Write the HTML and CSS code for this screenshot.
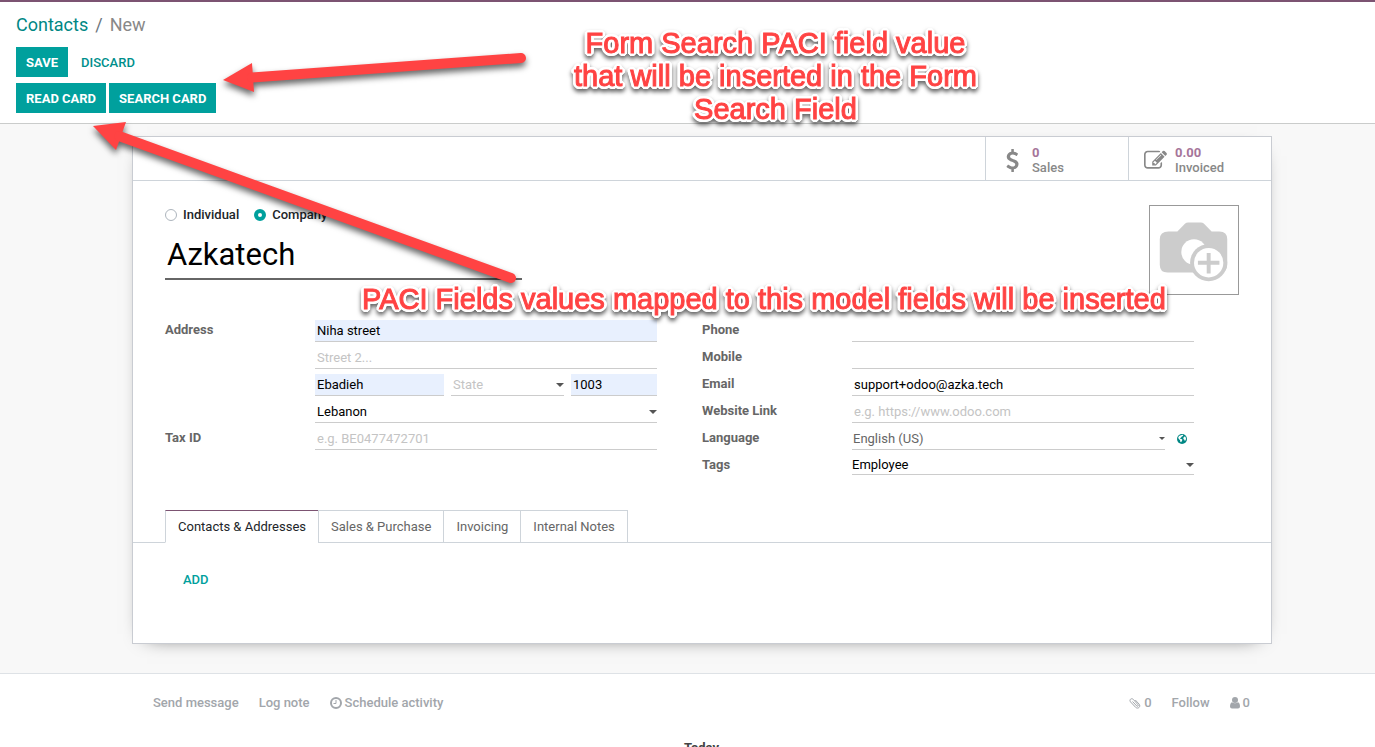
FILE: index.html
```html
<!DOCTYPE html>
<html lang="en">
<head>
<meta charset="utf-8">
<title>New - Contacts</title>
<link rel="stylesheet" href="styles.css">
</head>
<body>
<header class="control-panel">
  <nav class="breadcrumb"><a href="#">Contacts</a><span class="sep">/</span><span class="current">New</span></nav>
  <div class="button-row">
    <button class="btn primary" type="button">SAVE</button>
    <button class="btn flat" type="button">DISCARD</button>
  </div>
  <div class="button-row second">
    <button class="btn primary" type="button">READ CARD</button>
    <button class="btn primary" type="button">SEARCH CARD</button>
  </div>
</header>

<main class="form-view">
  <section class="sheet">
    <div class="stat-bar">
      <button class="stat" type="button">
        <svg class="stat-icon" viewBox="0 0 1024 1792"><path d="M978 1185q0 153-99.5 263.5T620 1585v175q0 14-9 23t-23 9H453q-13 0-22.5-9.5T421 1760v-175q-66-9-127.500-31T192 1509.500t-74-48-46.500-37.500-17.500-18q-17-21-2-41l103-135q7-10 23-12 15-2 24 9l2 2q113 99 243 125 37 8 74 8 81 0 142.500-43t61.500-122q0-28-15-53t-33.500-42-58.500-37.500-66-32-80-32.500q-39-16-61.500-25T346 950.500 283.500 920 226 884.500 172.500 842t-41.500-49-36-58.500-22-67-8.500-79.500q0-138 98-242t255-134V32q0-13 9.500-22.500T449 0h135q14 0 23 9t9 23v176q57 6 110.500 23t87 33.500 63.500 37.500 39 29 15 14q17 18 5 38l-81 146q-8 15-23 16-14 3-27-7-3-3-14.500-12t-39-26.500-58.500-32-74.500-26T540 430q-95 0-155 43t-60 111q0 26 8.500 48t29.500 41.500 39.500 33 56 31 60.500 27 70 27.500q53 20 81 31.500t76 35 75.500 42.500 62 50 53 63.500 31.500 76.500 13 94z"/></svg>
        <span class="stat-text"><span class="stat-value">0</span><span>Sales</span></span>
      </button>
      <button class="stat" type="button">
        <svg class="stat-icon" viewBox="0 0 1792 1792"><path d="M888 1184l116-116-152-152-116 116v56h96v96h56zm440-720q-16-16-33 1l-350 350q-17 17-1 33t33-1l350-350q17-17 1-33zm80 594v190q0 119-84.500 203.500T1120 1536H288q-119 0-203.500-84.500T0 1248V416q0-119 84.500-203.500T288 128h832q63 0 117 25 15 7 18 23 3 17-9 29l-49 49q-14 14-32 8-23-6-45-6H288q-66 0-113 47t-47 113v832q0 66 47 113t113 47h832q66 0 113-47t47-113v-126q0-13 9-22l64-64q15-15 35-7t20 29zm-96-738l288 288-672 672H640V992zm444 132l-92 92-288-288 92-92q28-28 68-28t68 28l152 152q28 28 28 68t-28 68z"/></svg>
        <span class="stat-text"><span class="stat-value">0.00</span><span>Invoiced</span></span>
      </button>
    </div>

    <div class="sheet-body">
      <div class="title-row">
        <div class="title">
          <div class="radios">
            <label><input type="radio" name="kind">Individual</label>
            <label><input type="radio" name="kind" checked>Company</label>
          </div>
          <input class="name-input" type="text" value="Azkatech" aria-label="Name">
        </div>
        <button class="avatar" type="button" aria-label="Add image">
          <svg viewBox="0 0 90 90">
            <path fill="#ccc" d="M19 26h9l8-8q1-1 3-1h13q2 0 3 1l8 8h8q8 0 8 8v26q0 8-8 8H18q-8 0-8-8V34q0-8 9-8z"/>
            <circle cx="45" cy="47" r="13" fill="#fff"/>
            <circle cx="60" cy="58" r="19" fill="#ccc"/>
            <circle cx="60" cy="58" r="15" fill="#fff"/>
            <path d="M60 48v21M49 58h22" stroke="#ccc" stroke-width="4"/>
          </svg>
        </button>
      </div>

      <div class="groups">
        <div class="group">
          <label class="field-label" for="street">Address</label>
          <div class="field"><input class="filled" id="street" type="text" value="Niha street"></div>
          <div class="field wide"><input type="text" placeholder="Street 2..." aria-label="Street 2"></div>
          <div class="field wide address-line">
            <input class="filled city" type="text" value="Ebadieh" aria-label="City">
            <span class="drop state"><select class="unset" aria-label="State"><option>State</option></select></span>
            <input class="filled zip" type="text" value="1003" aria-label="ZIP">
          </div>
          <div class="field wide"><span class="drop"><select aria-label="Country"><option>Lebanon</option></select></span></div>
          <label class="field-label" for="tax">Tax ID</label>
          <div class="field"><input id="tax" type="text" placeholder="e.g. BE0477472701"></div>
        </div>
        <div class="group">
          <label class="field-label" for="phone">Phone</label>
          <div class="field"><input id="phone" type="text"></div>
          <label class="field-label" for="mobile">Mobile</label>
          <div class="field"><input id="mobile" type="text"></div>
          <label class="field-label" for="email">Email</label>
          <div class="field"><input id="email" type="text" value="support+odoo@azka.tech"></div>
          <label class="field-label" for="site">Website Link</label>
          <div class="field"><input id="site" type="text" placeholder="e.g. https://www.odoo.com"></div>
          <label class="field-label" for="lang">Language</label>
          <div class="field language">
            <span class="drop small"><select class="muted" id="lang"><option>English (US)</option></select></span>
            <button class="globe" type="button" aria-label="More languages">
              <svg viewBox="0 0 12 12"><circle cx="6" cy="6" r="5" fill="#008784"/><path fill="#fff" d="M5 2.200l1.500-.4.8.7-.8.8-1 .5-.5 1-1 .2.300.8 1.200.200.9.8-.5 1.200-.8 1.300-.8-.5-.2-1.500-1-1L2.200 5l.3-1.200 1-1zM8.500 3.500l1 .3.500 1.700-.3 1.700-1 .6-.5-1.300-.9-.6.200-1.300z"/></svg>
            </button>
          </div>
          <label class="field-label" for="tags">Tags</label>
          <div class="field tags"><span class="drop"><select id="tags"><option>Employee</option></select></span></div>
        </div>
      </div>

      <div class="tabs" role="tablist">
        <button class="tab active" type="button" role="tab" aria-selected="true">Contacts &amp; Addresses</button>
        <button class="tab" type="button" role="tab">Sales &amp; Purchase</button>
        <button class="tab" type="button" role="tab">Invoicing</button>
        <button class="tab" type="button" role="tab">Internal Notes</button>
      </div>
      <div class="tab-page"><button class="add" type="button">ADD</button></div>
    </div>
  </section>
</main>

<footer class="chatter">
  <div class="chatter-bar">
    <button type="button">Send message</button>
    <button type="button">Log note</button>
    <button type="button"><svg class="clock" viewBox="0 0 12 12"><circle cx="6" cy="6" r="5" fill="none" stroke="currentColor" stroke-width="2"/><path d="M6 3v3.500H3.500" fill="none" stroke="currentColor"/></svg>Schedule activity</button>
    <span class="spacer"></span>
    <button type="button"><svg class="clip" viewBox="0 0 12 12"><path d="M3.500 4.500l4.300 4.500c1 .8 2-.2 1.200-1.200L4.300 2.400C2.300.6-.1 2.800 1.500 4.900l5.200 5.500c2.500 2 5.300-.8 3.500-3.200L6.300 3" fill="none" stroke="currentColor" stroke-width="1"/></svg>0</button>
    <button type="button">Follow</button>
    <button type="button"><svg class="user" viewBox="0 0 10 12"><circle cx="5" cy="3" r="3" fill="currentColor"/><path fill="currentColor" d="M2 5.300q3 2 6 0Q10 6 10 9.500q0 2-2 2H2q-2 0-2-2Q0 6 2 5.300z"/></svg>0</button>
  </div>
  <div class="day">Today</div>
</footer>

<div class="annotations">
  <svg class="arrows" width="540" height="300" viewBox="0 0 540 300">
    <g fill="#ff4343" stroke="#ff4343">
      <path stroke="none" d="M223 80L252 63L254 92z"/>
      <path d="M252 77.500L521 58" stroke-width="10" stroke-linecap="round"/>
      <path stroke="none" d="M93 126L126 122L116 150z"/>
      <path d="M119 136L511 278" stroke-width="10" stroke-linecap="round"/>
    </g>
  </svg>
  <p class="note note-top">Form Search PACI field value<br>that will be inserted in the Form<br>Search Field</p>
  <p class="note note-fields">PACI Fields values mapped to this model fields will be inserted</p>
</div>
</body>
</html>
```
FILE: styles.css
```css
* {
  box-sizing: border-box;
}

body {
  margin: 0;
  height: 100vh;
  overflow: hidden;
  position: relative;
  background: #fff;
  color: #666;
  font: 13px/20px Roboto, "Open Sans", sans-serif;
}

button,
input,
select {
  font: inherit;
  color: inherit;
  margin: 0;
  padding: 0;
  border: 0;
  border-radius: 0;
  background: none;
}

a {
  color: #008784;
  text-decoration: none;
}

/* control panel */
.control-panel {
  border-top: 2px solid #7c5372;
  border-bottom: 1px solid #cacccb;
  padding: 9px 16px 10px;
}

.breadcrumb {
  display: flex;
  gap: 7px;
  font-size: 18px;
  line-height: 27px;
  color: #6c757d;
}

.breadcrumb .current {
  color: #888;
}

.button-row {
  display: flex;
  gap: 3px;
  margin-top: 9px;
}

.button-row.second {
  margin-top: 6px;
}

.btn {
  height: 30px;
  padding: 2px 10px 0;
  font-weight: 500;
}

.btn.primary {
  background: #00a09d;
  color: #fff;
  font-weight: 700;
}

.btn.flat {
  color: #008f8c;
}

/* sheet */
.form-view {
  background: #f8f8f8;
  padding: 12px 103px 29px 132px;
  overflow: hidden;
}

.sheet {
  background: #fff;
  border: 1px solid #c9ccd2;
  box-shadow: 0 5px 20px -15px #000;
}

.stat-bar {
  display: flex;
  justify-content: flex-end;
  height: 44px;
  border-bottom: 1px solid #ced4da;
}

.stat {
  width: 143px;
  display: flex;
  align-items: center;
  gap: 8px;
  padding: 3px 0 0 15px;
  border-left: 1px solid #ced4da;
  color: #888;
  font-weight: 500;
  line-height: 15px;
  text-align: left;
}

.stat-icon {
  width: 23px;
  height: 23px;
  fill: #888;
}

.stat-text {
  display: flex;
  flex-direction: column;
}

.stat-value {
  color: #a6759a;
  font-weight: 700;
}

.sheet-body {
  padding: 24px 32px 0;
}

.title-row {
  display: flex;
  justify-content: space-between;
  height: 115px;
}

.title {
  width: 357px;
}

.radios {
  display: flex;
  gap: 15px;
  color: #212529;
  font-weight: 500;
}

.radios label {
  display: flex;
  align-items: center;
  gap: 6px;
}

.radios input {
  appearance: none;
  width: 12px;
  height: 12px;
  border: 1px solid #adb5bd;
  border-radius: 50%;
}

.radios input:checked {
  border: 4px solid #00a09d;
}

.name-input {
  display: block;
  width: 100%;
  height: 50px;
  margin-top: 5px;
  padding: 0 2px;
  border-bottom: 2px solid #666;
  color: #000;
  font-size: 31px;
}

.avatar {
  width: 90px;
  height: 90px;
  border: 1px solid #999;
}

.avatar svg {
  display: block;
  width: 88px;
  height: 88px;
}

.groups {
  display: grid;
  grid-template-columns: 1fr 1fr;
}

.group {
  display: grid;
  grid-template-columns: 150px 1fr;
  grid-auto-rows: 22px;
  row-gap: 5px;
  padding-right: 45px;
}

.field-label {
  font-weight: 700;
}

.field {
  display: flex;
  min-width: 0;
}

.field.wide {
  grid-column: 2;
}

.field.tags {
  height: 20px;
}

.address-line {
  gap: 7px;
}

.field input,
.drop {
  flex: 1;
  min-width: 0;
  border-bottom: 1px solid #ccc;
  color: #000;
}

.field input {
  padding: 0 2px;
}

.field input.filled {
  background: #e8f0fe;
}

.field input::placeholder {
  color: #c4c4c4;
}

.field .city {
  flex: 125;
}

.drop.state {
  flex: 113;
}

.field .zip {
  flex: 82;
}

.drop {
  display: flex;
  align-items: center;
}

.drop select {
  appearance: none;
  flex: 1;
  min-width: 0;
  height: 20px;
  padding-left: 2px;
  outline: 0;
}

.drop select.unset {
  color: #c4c4c4;
}

.drop select.muted {
  color: #666;
  padding-left: 1px;
}

.tags .drop select {
  padding-left: 0;
}

.drop::after {
  content: "";
  border: 4px solid transparent;
  border-top-color: #555;
  border-bottom: 0;
}

.drop.small::after {
  border-width: 3px 3px 0;
}

.globe {
  width: 29px;
  padding-left: 11px;
}

.globe svg {
  display: block;
  width: 12px;
  height: 12px;
}

/* notebook */
.tabs {
  display: flex;
  margin: 33px -32px 0;
  padding-left: 32px;
  border-bottom: 1px solid #ced4da;
}

.tab {
  height: 33px;
  padding: 0 12px;
  margin: 0 0 -1px -1px;
  border: 1px solid #ced4da;
}

.tab:first-child {
  margin-left: 0;
}

.tab.active {
  border-top-color: #7c5372;
  border-bottom-color: #fff;
  color: #212529;
}

.tab-page {
  height: 100px;
  padding: 27px 18px;
}

.add {
  display: block;
  color: #00a09d;
  font-weight: 500;
}

/* chatter */
.chatter {
  border-top: 1px solid #dee2e6;
  padding: 19px 125px 0 153px;
  color: #a2a6ab;
  font-weight: 500;
}

.chatter-bar {
  display: flex;
  gap: 20px;
}

.chatter-bar button {
  display: flex;
  align-items: center;
  gap: 3px;
}

.chatter .clock,
.chatter .clip {
  width: 12px;
  height: 12px;
}

.chatter .user {
  width: 10px;
  height: 12px;
}

.spacer {
  flex: 1;
}

.day {
  margin-top: 25px;
  color: #444;
  font-weight: 700;
  text-align: center;
}

/* callouts over the form */
.annotations {
  position: absolute;
  inset: 0;
  pointer-events: none;
}

.arrows {
  position: absolute;
  left: 0;
  top: 0;
  filter: drop-shadow(0 4px 3px rgba(0, 0, 0, 0.6));
}

.note {
  position: absolute;
  margin: 0;
  color: #ff4343;
  font: 29px/33px "Liberation Sans", Arial, sans-serif;
  text-align: center;
  white-space: nowrap;
  -webkit-text-stroke: 1px #ff4343;
  text-shadow:
    3px 0 #fff, -3px 0 #fff, 0 3px #fff, 0 -3px #fff,
    3px 1px #fff, 3px -1px #fff, -3px 1px #fff, -3px -1px #fff,
    1px 3px #fff, 1px -3px #fff, -1px 3px #fff, -1px -3px #fff,
    2px 2px #fff, 2px -2px #fff, -2px 2px #fff, -2px -2px #fff,
    1px 1px #fff, 1px -1px #fff, -1px 1px #fff, -1px -1px #fff;
  filter: drop-shadow(0 3px 2px rgba(0, 0, 0, 0.6));
}

.note-top {
  left: 574px;
  top: 27px;
}

.note-fields {
  left: 362px;
  top: 283px;
}
```
